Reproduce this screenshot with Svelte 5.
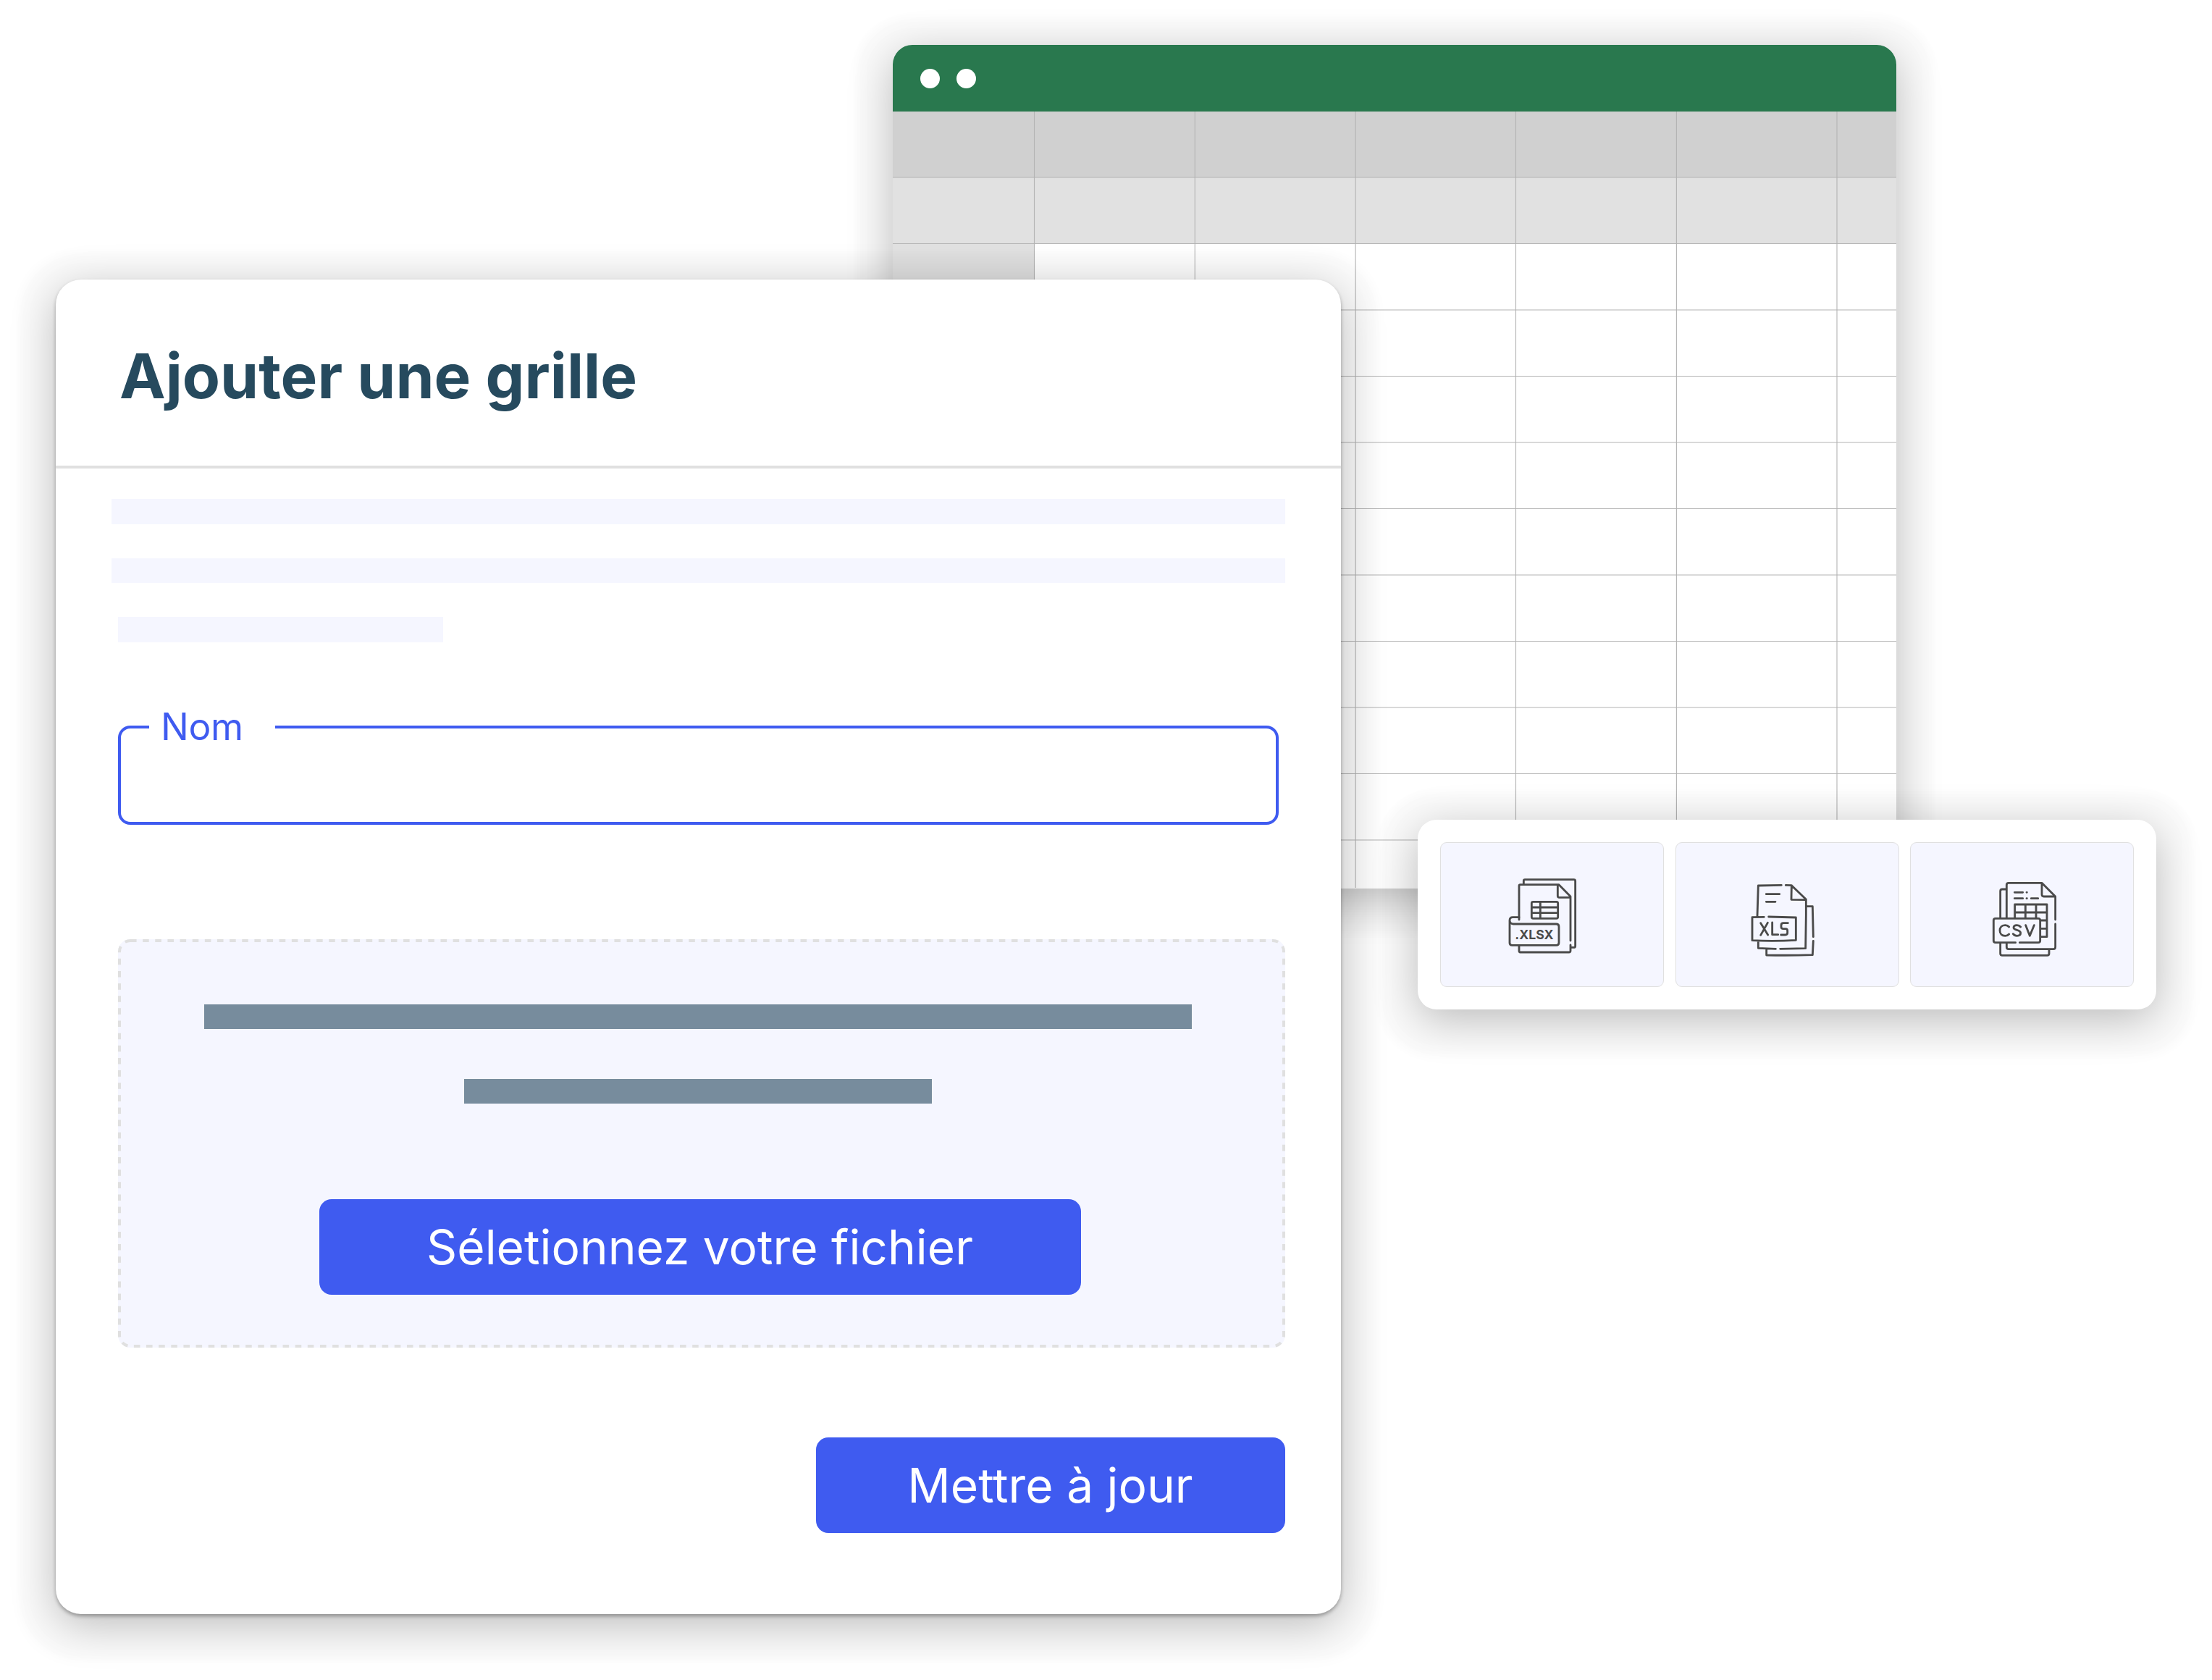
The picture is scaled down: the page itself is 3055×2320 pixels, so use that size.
<script>
  // Upload dialog floating over a spreadsheet window, with the accepted formats on a small card.
  const columns = [195.5, 417.3, 639.1, 860.5, 1082.4, 1304];
  const rowStep = 91.5;
  const rows = Array.from({ length: 11 }, (_, i) => 91 + i * rowStep);
</script>

<main class="scene">
  <section class="sheet">
    <header><i></i><i></i></header>
    <svg width="1386" height="1072" viewBox="0 0 1386 1072" aria-hidden="true">
      <rect width="1386" height="91" fill="#d0d0d0" />
      <rect y="91" width="1386" height="91.5" fill="#e1e1e1" />
      <rect y="182" width="195" height="890" fill="#e1e1e1" />
      {#each rows as y}
        <line x1="0" y1={y} x2="1386" y2={y} />
      {/each}
      {#each columns as x}
        <line x1={x} y1="0" x2={x} y2="1072" />
      {/each}
    </svg>
  </section>

  <section class="dialog">
    <header><h1>Ajouter une grille</h1></header>
    <div class="body">
      <div class="lines">
        <span></span>
        <span></span>
        <span class="short"></span>
      </div>
      <fieldset><legend>Nom</legend></fieldset>
      <div class="dropzone">
        <svg class="dashes" width="1612" height="564" aria-hidden="true">
          <rect x="2" y="2" width="1608" height="560" rx="15" />
        </svg>
        <span class="bar"></span>
        <span class="bar small"></span>
        <button>Séletionnez votre fichier</button>
      </div>
      <button class="update">Mettre à jour</button>
    </div>
  </section>

  <section class="formats">
    <div class="tile">
      <svg width="160" height="150" viewBox="0 0 480 450" aria-label="XLSX">
        <path d="M133 94V79Q133 74 138 74H341Q347 74 347 80V350Q347 355 341 355H330M114 240V100Q114 95 119 95H279L327 144V327M274 96V142Q274 148 280 148H326M327 345V369Q327 375 321 375H119Q114 375 114 369V348" />
        <path d="M114 230H88Q75 230 75 243V336Q75 346 85 346H268Q279 346 279 335V269Q279 258 268 258H90Q76 257 75 243M172 166H269Q275 166 275 172V229Q275 235 269 235H172Q166 235 166 229V172Q166 166 172 166ZM202 166V235M166 189H275M166 212H275" />
        <text x="97" y="322" font-size="54" textLength="160" lengthAdjust="spacingAndGlyphs">.XLSX</text>
      </svg>
    </div>
    <div class="tile xls">
      <svg width="160" height="150" viewBox="0 0 480 450" aria-label="XLS">
        <path d="M108 226L112 99L208 97M226 97L250 98L310 156V220L308 359L203 361M250 98L249 157L310 158M145 134H200M145 166H183M136 229L87 230V326Q176 331 268 325V231L155 228M112 330V358L184 361M315 185H337L340 311M340 328L337 386Q240 389 146 387V363" />
        <path d="M122 254L152 303M151 253L122 304M170 252V302H194M235 254H216Q207 254 207 263V270Q207 278 216 278H225Q233 278 233 286V295Q233 303 224 303H206" />
      </svg>
    </div>
    <div class="tile csv">
      <svg width="160" height="150" viewBox="0 0 480 450" aria-label="CSV">
        <path d="M154 232V96Q154 88 162 88H300L356 144V240M300 90V136Q300 144 308 144H355M356 258V354Q356 362 348 362H162Q154 362 154 354V339M152 114H136Q128 114 128 122V232M128 340V380Q128 388 136 388H322Q330 388 330 380V364M187 127H221M187 152H221M237 127H238M237 152H238M256 152H284" />
        <path d="M188 232V177H321V311H298M188 210H321M298 243H321M298 277H321M232 177V232M276 177V232M191 335H108Q100 335 100 327V243Q100 235 108 235H285Q293 235 293 243V327Q293 335 285 335H208" />
        <path d="M164 270Q158 263 148 263C134 263 126 273 126 285S134 307 148 307Q158 307 164 300M212 270Q206 263 197 263C188 263 183 267 183 273C183 286 212 280 212 295C212 303 205 307 197 307Q187 307 181 299M233 263L250 307L268 263" />
      </svg>
    </div>
  </section>
</main>

<style>
  :global(body) { margin: 0; background: #fff; }
  .scene {
    --halo: 0 14px 60px rgba(0, 0, 0, 0.25), 0 13px 12px 50px rgba(0, 0, 0, 0.02);
    position: relative; width: 3055px; height: 2320px; overflow: hidden; background: #fff; font-family: Inter, sans-serif;
  }
  section { position: absolute; box-sizing: border-box; }

  .sheet {
    left: 1233px; top: 62px; width: 1386px; height: 1164.5px;
    display: flex; flex-direction: column;
    background: #fff; border-radius: 27px 27px 0 0;
    box-shadow: var(--halo);
  }
  .sheet header { display: flex; flex: none; gap: 23px; height: 92px; box-sizing: border-box; padding: 33px 37.5px; background: #29784e; border-radius: 27px 27px 0 0; }
  .sheet i { width: 27px; height: 27px; border-radius: 50%; background: #fff; }
  .sheet svg { display: block; }
  .sheet line { stroke: #b3b3b3; stroke-width: 1.1; }

  .dialog {
    left: 77px; top: 386px; width: 1774.5px; height: 1842.5px;
    display: flex; flex-direction: column;
    background: #fff; border-radius: 35px;
    box-shadow: 0 3px 5px rgba(0, 0, 0, 0.3), var(--halo);
  }
  .dialog header { height: 257px; border-bottom: 4px solid #e0e0e0; padding: 0 88px; display: flex; align-items: center; }
  h1 { margin: 8px 0 0; font-size: 85.3px; line-height: 104px; font-weight: 700; color: #264a5e; white-space: nowrap; }
  .body { flex: 1; display: flex; flex-direction: column; padding: 42px 77px 112px; }
  .lines { display: flex; flex-direction: column; gap: 47px; }
  .lines span { height: 34.5px; background: #f5f6ff; }
  .lines .short { width: 449px; margin-left: 9px; }

  fieldset {
    width: 1603px; height: 155px; box-sizing: border-box; margin: 97px 0 0 9px; padding: 0 39px;
    border: 4px solid #3f5bf0; border-radius: 17px; min-width: 0;
  }
  legend { width: 174px; box-sizing: border-box; padding: 0 0 2px 16px; font-size: 51.5px; line-height: 38px; font-weight: 400; letter-spacing: -0.3px; color: #3f5bf0; }

  .dropzone { position: relative; width: 1612px; height: 564px; box-sizing: border-box; margin: 158px 0 0 9px; padding-top: 90px; display: flex; flex-direction: column; align-items: center; background: #f5f6ff; border-radius: 17px; }
  .dashes { position: absolute; inset: 0; }
  .dashes rect { fill: none; stroke: #e0e0e0; stroke-width: 4; stroke-dasharray: 8.57 8.57; }
  .bar { width: 1364px; height: 34px; margin-right: 10px; background: #778c9d; }
  .small { width: 646px; margin-top: 69px; }
  button { height: 132px; border: 0; border-radius: 17px; background: #3f5bf0; color: #fff; font: 400 65.8px/132px Inter, sans-serif; padding: 0; }
  .dropzone button { width: 1052px; margin: 132px 5px 0 0; }
  .update { width: 648px; align-self: flex-end; margin-top: auto; }

  .formats {
    left: 1958px; top: 1132px; width: 1020px; height: 262px;
    display: flex; gap: 15.5px; padding: 31px;
    background: #fff; border-radius: 26px;
    box-shadow: var(--halo);
  }
  .tile { flex: none; width: 309px; display: flex; align-items: flex-start; box-sizing: border-box; padding: 26px 0 0 70px; border: 1px solid #e0e0e0; border-radius: 9px; background: #f5f6ff; }
  .tile svg { flex: none; }
  .xls { padding-left: 76px; }
  .csv { padding-left: 81px; }
  .tile path { fill: none; stroke: #4a4a4a; stroke-width: 8.5; stroke-linecap: round; stroke-linejoin: round; }
  .tile text { font-family: Inter, sans-serif; font-weight: 700; fill: #4a4a4a; }
</style>
